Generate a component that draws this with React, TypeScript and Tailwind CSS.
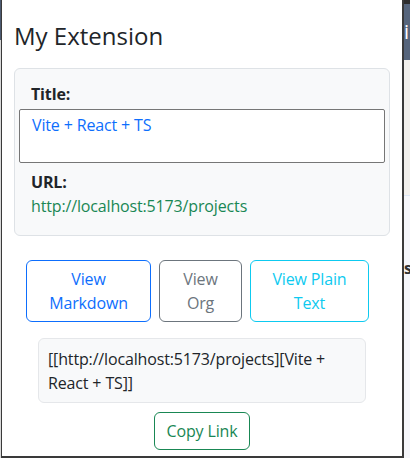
import React from "react";

export default function App() {
  const font = { fontFamily: '"Open Sans", "Noto Sans", sans-serif' };
  return (
    <div className="w-[410px] h-[458px] flex overflow-hidden bg-white" style={font}>
      <div className="w-[1px] shrink-0 flex flex-col">
        <div className="h-[40px] bg-[#4b5a70]" />
        <div className="flex-1 bg-[#d8d8d8]" />
      </div>
      <div className="w-[403px] shrink-0 h-[458px] bg-white border-l border-r-2 border-b-2 border-[#3a3a3a] flex flex-col px-3 text-[16px] leading-[24px] tracking-[-0.15px] text-[#212529]">
        <h4 className="mt-[21px] text-[24px] leading-[29px] font-medium tracking-normal text-[#212529]">My Extension</h4>
        <div className="mt-[18px] h-[168px] bg-[#f8f9fa] border border-[#dee2e6] rounded-[6px] flex flex-col px-[4px] pt-[13px]">
          <div className="pl-[12px] font-bold">Title:</div>
          <div className="mt-[3px] h-[54px] bg-white border border-[#767676] rounded-[2px] pl-[12px] pt-[3px] text-[#0d6efd]">
            Vite + React + TS
          </div>
          <div className="mt-[7px] pl-[12px] font-bold">URL:</div>
          <div className="pl-[12px] text-[#198754]">http://localhost:5173/projects</div>
        </div>
        <div className="mt-[24px] flex gap-2 pl-[12px]">
          <button className="w-[125px] h-[62px] border border-[#0d6efd] text-[#0d6efd] rounded-[6px] flex flex-col items-center justify-center">
            <span>View</span>
            <span>Markdown</span>
          </button>
          <button className="w-[83px] h-[62px] border border-[#6c757d] text-[#6c757d] rounded-[6px] flex flex-col items-center justify-center">
            <span>View</span>
            <span>Org</span>
          </button>
          <button className="w-[119px] h-[62px] border border-[#0dcaf0] text-[#0dcaf0] rounded-[6px] flex flex-col items-center justify-center">
            <span>View Plain</span>
            <span>Text</span>
          </button>
        </div>
        <div className="mt-[16px] ml-[24px] w-[328px] h-[65px] bg-[#f8f9fa] border border-[#e5e7ea] rounded-[6px] px-[9px] pt-[8px]">
          [[http://localhost:5173/projects][Vite +
          <br />
          React + TS]]
        </div>
        <div className="mt-[9px] flex justify-center">
          <button className="w-[96px] h-[38px] border border-[#198754] text-[#198754] rounded-[6px]">
            Copy Link
          </button>
        </div>
      </div>
      <div className="w-[6px] shrink-0 flex flex-col overflow-hidden">
        <div className="h-[4px] bg-[#2d2d2d]" />
        <div className="h-[56px] bg-[#56657c] text-white text-[20px] leading-[56px] whitespace-nowrap overflow-hidden">in</div>
        <div className="h-[135px] bg-[#f2f0ed]" />
        <div className="h-[1px] bg-[#dce6f5]" />
        <div className="flex-1 bg-[#f5f6fa] pt-[60px] text-[16px] font-bold text-[#333] whitespace-nowrap overflow-hidden">s:</div>
      </div>
    </div>
  );
}
